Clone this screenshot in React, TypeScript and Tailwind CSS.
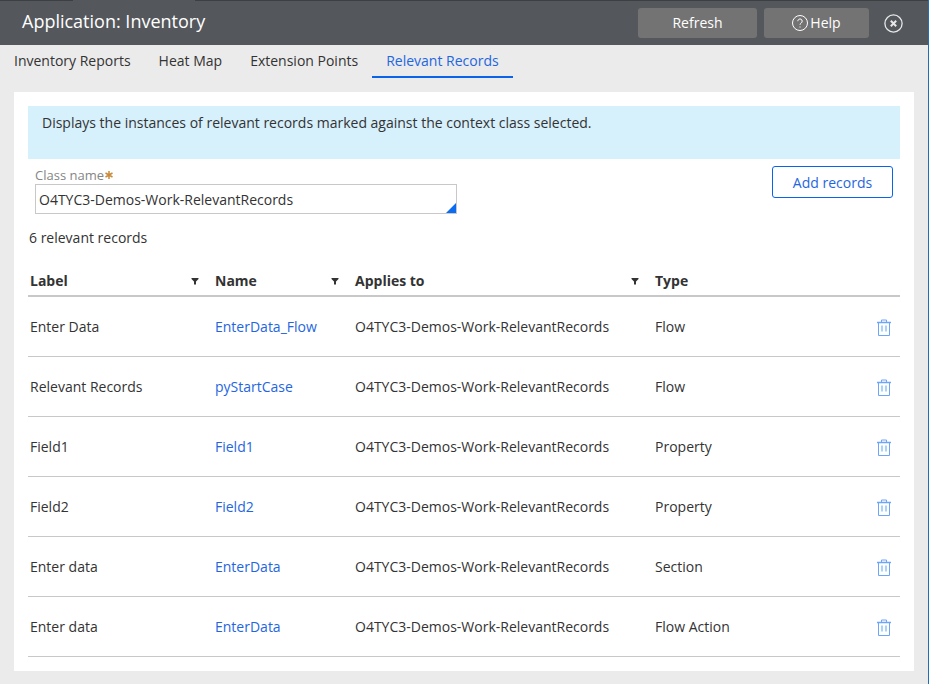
const rows = [
  { label: "Enter Data", name: "EnterData_Flow", type: "Flow" },
  { label: "Relevant Records", name: "pyStartCase", type: "Flow" },
  { label: "Field1", name: "Field1", type: "Property" },
  { label: "Field2", name: "Field2", type: "Property" },
  { label: "Enter data", name: "EnterData", type: "Section" },
  { label: "Enter data", name: "EnterData", type: "Flow Action" },
];

const tabs = ["Inventory Reports", "Heat Map", "Extension Points", "Relevant Records"];

function FilterIcon() {
  return (
    <svg width="8" height="8" viewBox="0 0 8 8" className="shrink-0">
      <path d="M0.5 1h7v1L5 4.5V7.5H3V4.5L0.5 2z" fill="#333" />
    </svg>
  );
}

function TrashIcon() {
  return (
    <svg width="14" height="17" viewBox="0 0 14 17" fill="none" className="shrink-0 mt-[2px]">
      <path d="M4.5 3V1h5v2" stroke="#6ea5f8" />
      <path d="M0 3.5h14" stroke="#6ea5f8" strokeWidth="1.5" />
      <path d="M1.5 4v12.5h11V4" stroke="#6ea5f8" />
      <path d="M5 6.5v6M9 6.5v6" stroke="#a9d3fb" strokeWidth="2" />
    </svg>
  );
}

export default function App() {
  return (
    <div className="w-[929px] h-[684px] overflow-hidden bg-[#ebebeb] border-r border-r-[#1f6fb5] font-['Open_Sans',sans-serif] text-[14px] text-[#333]">
      <header className="h-[45px] bg-[#54575c] flex flex-col text-white">
        <div className="h-px flex shrink-0">
          <div className="w-[73px] bg-[#3c4043]" />
          <div className="w-[122px]" />
          <div className="flex-1 bg-[#3c4043]" />
        </div>
        <div className="flex-1 flex items-center pl-[22px] pr-[25px]">
          <h1 className="text-[18px] flex-1 mb-[4px]">Application: Inventory</h1>
          <button className="w-[119px] h-[30px] pb-[2px] rounded-[3px] bg-[#737373] text-[14px]">Refresh</button>
          <button className="w-[105px] h-[30px] ml-[7px] pb-[2px] rounded-[3px] bg-[#737373] text-[14px] flex items-center justify-center gap-[2px]">
            <svg width="16" height="16" viewBox="0 0 16 16" fill="none" stroke="white" strokeWidth="1" className="mt-[2px]">
              <circle cx="8" cy="8" r="7.5" />
              <path d="M5.8 6.2a2.2 2.2 0 1 1 3.4 1.8c-.8.5-1.2.9-1.2 1.8" />
              <path d="M8 11.5v1" />
            </svg>
            Help
          </button>
          <svg width="19" height="19" viewBox="0 0 19 19" fill="none" stroke="#e8e8e8" className="ml-[15px]">
            <circle cx="9.5" cy="9.5" r="8.6" strokeWidth="1.3" />
            <path d="M6.8 6.8l5.4 5.4M12.2 6.8l-5.4 5.4" strokeWidth="2" />
          </svg>
        </div>
      </header>

      <nav className="h-[33px] flex pl-[14px] gap-[28px]">
        {tabs.map((t, i) =>
          i === 3 ? (
            <a key={t} className="h-[33px] -ml-[14px] px-[14px] border-b-2 border-b-[#0b63ea] text-[#1f66e0] leading-[32px]">{t}</a>
          ) : (
            <a key={t} className="h-[33px] leading-[32px]">{t}</a>
          ),
        )}
      </nav>

      <main className="bg-white mx-[14px] mt-[14px] w-[900px] h-[579px] pt-[14px] px-[14px]">
        <div className="h-[53px] bg-[#d6f0fc] px-[14px] pt-[6px]">
          Displays the instances of relevant records marked against the context class selected.
        </div>

        <div className="flex justify-between pl-[7px] pr-[7px]">
          <div className="w-[422px] pt-[7px]">
            <label className="flex items-center h-[18px] leading-[18px] text-[13px] text-[#858585]">
              Class name
              <svg width="8" height="8" viewBox="0 0 8 8" stroke="#c98a3a" strokeWidth="1.5" className="ml-px">
                <path d="M4 0v8M0.5 2l7 4M7.5 2l-7 4" />
              </svg>
            </label>
            <div className="relative h-[30px] border border-[#c8c8c8] pl-[3px] leading-[30px] overflow-hidden">
              O4TYC3-Demos-Work-RelevantRecords
              <span className="absolute right-0 bottom-0 w-0 h-0 border-l-[10px] border-l-transparent border-b-[10px] border-b-[#0b6cf0]" />
            </div>
          </div>
          <button className="w-[121px] h-[32px] mt-[7px] bg-white border border-[#0b63ea] rounded-[3px] text-[#1f66e0]">Add records</button>
        </div>

        <p className="mt-[14px] h-[20px] leading-[20px] pl-px">6 relevant records</p>

        <table className="w-[872px] mt-[18px] table-fixed border-collapse">
          <thead>
            <tr className="h-[30px] border-b-2 border-b-[#c8c8c8] font-bold">
              <th className="w-[187px] pl-[2px] pr-[16px] text-left">
                <div className="flex items-center justify-between">Label<FilterIcon /></div>
              </th>
              <th className="w-[140px] pr-[16px] text-left">
                <div className="flex items-center justify-between">Name<FilterIcon /></div>
              </th>
              <th className="w-[300px] pr-[16px] text-left">
                <div className="flex items-center justify-between">Applies to<FilterIcon /></div>
              </th>
              <th className="text-left">Type</th>
              <th className="w-[40px]" />
            </tr>
          </thead>
          <tbody>
            {rows.map((r, i) => (
              <tr key={i} className="h-[60px] border-b border-b-[#c8c8c8]">
                <td className="pl-[2px]">{r.label}</td>
                <td className="text-[#1f66e0]">{r.name}</td>
                <td>O4TYC3-Demos-Work-RelevantRecords</td>
                <td>{r.type}</td>
                <td>
                  <div className="flex justify-end pr-[9px]">
                    <TrashIcon />
                  </div>
                </td>
              </tr>
            ))}
          </tbody>
        </table>
      </main>
    </div>
  );
}
